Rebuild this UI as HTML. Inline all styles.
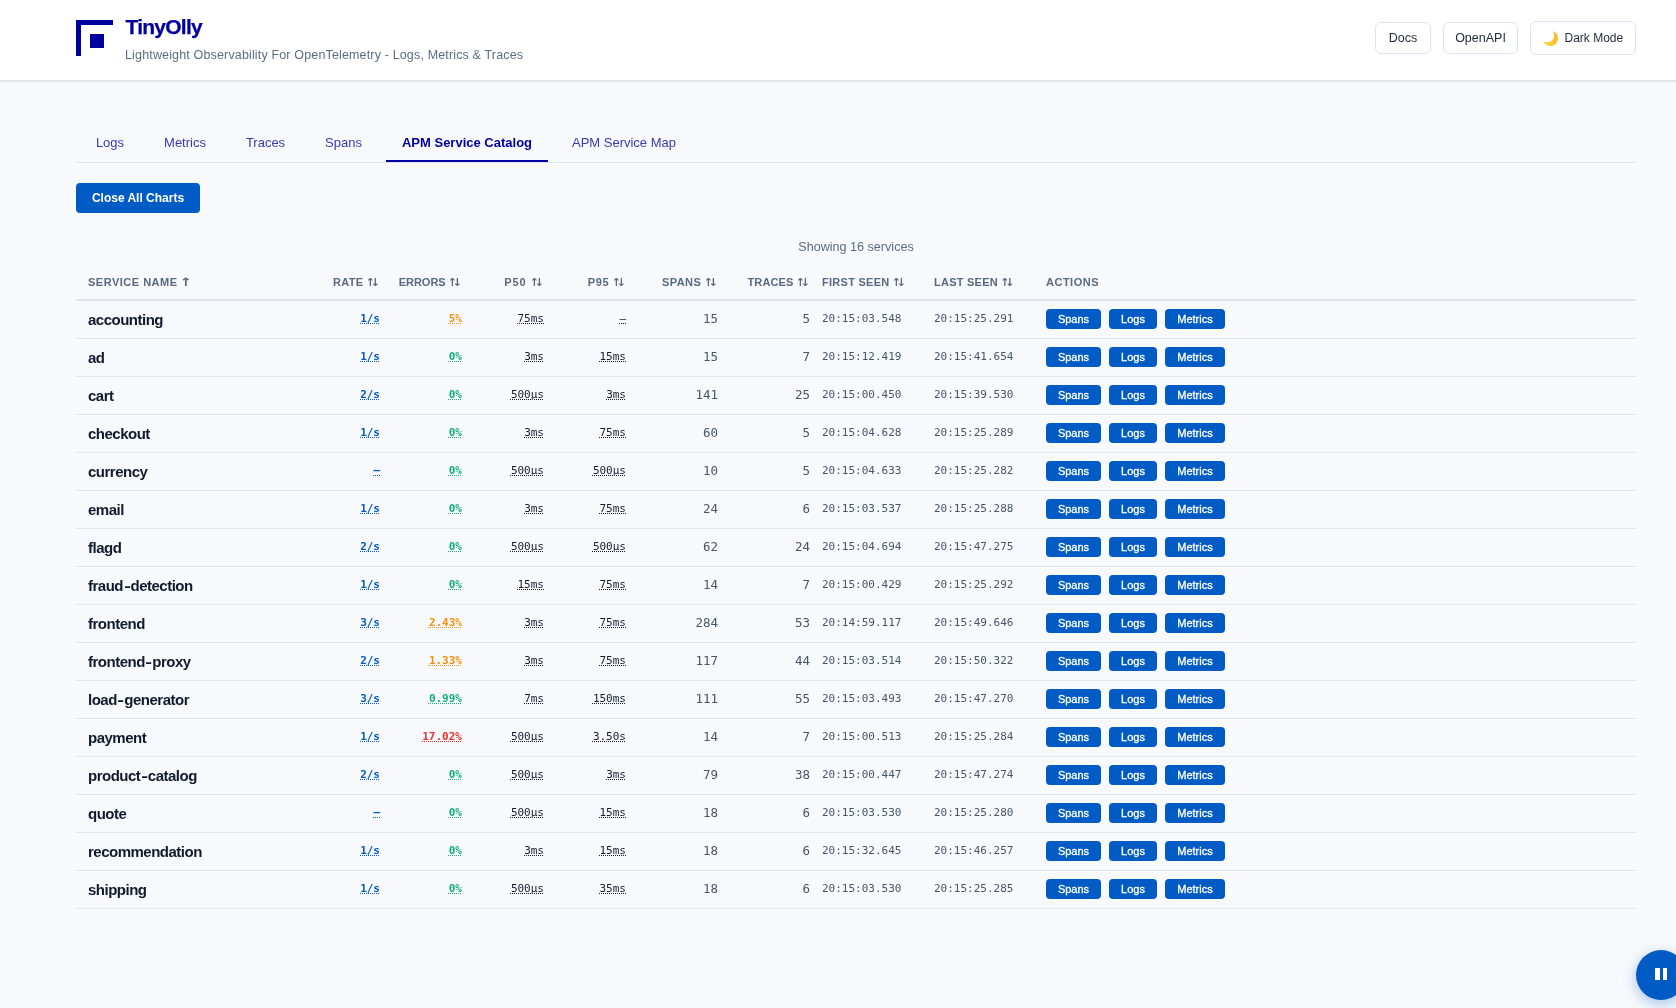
<!DOCTYPE html>
<html lang="en">
<head>
<meta charset="utf-8">
<title>TinyOlly</title>
<style>
*{box-sizing:border-box;margin:0;padding:0}
html,body{width:1676px;height:1008px;overflow:hidden}
body{will-change:transform;-webkit-font-smoothing:antialiased;background:#f8f9fc;font-family:"Liberation Sans",sans-serif;color:#1e293b;position:relative}
.hdr{position:absolute;left:0;top:0;width:1676px;height:81px;background:#fff;border-bottom:1px solid #dde3ec;box-shadow:0 1px 2px rgba(0,0,0,.09)}
.logo{position:absolute;left:76px;top:20px;width:37px;height:36px}
.title{position:absolute;left:125.5px;top:15px;font-size:21px;letter-spacing:-.75px;-webkit-text-stroke:.25px #0000a0;font-weight:700;color:#0000a0;line-height:24px;white-space:nowrap}
.sub{position:absolute;left:125px;top:47px;font-size:12.5px;letter-spacing:.155px;color:#5c6c84;line-height:16px;white-space:nowrap}
.hb{position:absolute;background:#fff;border:1px solid #dbe2f0;border-radius:6px;font-size:12px;color:#1e293b;text-align:center;white-space:nowrap}
.tabs{position:absolute;left:76px;top:124px;width:1560px;height:39px;border-bottom:1px solid #dfe5ef}
.tab{position:absolute;top:0;height:38px;line-height:38px;font-size:13px;color:#3a3ab0;white-space:nowrap;text-align:center}
.tab.on{color:#0000a0;font-weight:700;border-bottom:2px solid #0000a0}
.close{position:absolute;left:76px;top:183px;width:124px;height:30px;border-radius:4px;background:#005bc4;color:#fff;font-weight:700;font-size:12px;line-height:30px;text-align:center;white-space:nowrap}
.showing{position:absolute;left:76px;top:239px;width:1560px;text-align:center;font-size:12.6px;line-height:16px;color:#5c6c84}
.wrap{position:absolute;left:76px;top:263px;width:1560px}
table{border-collapse:collapse;table-layout:fixed;width:1560px}
th{height:37px;font-size:11px;font-weight:700;letter-spacing:.5px;color:#5a6880;text-transform:uppercase;text-align:left;padding:2px 6px 0;border-bottom:2px solid #dfe5ef;white-space:nowrap}
th.r,td.r{text-align:right}
th:first-child,td:first-child{padding-left:12px}
td{height:38px;padding:0 6px;border-bottom:1px solid #dfe5ef;white-space:nowrap;vertical-align:middle}
td.nm{font-size:15px;letter-spacing:-.5px;font-weight:700;color:#111a2e}
td.r,td.ts{font-family:"DejaVu Sans Mono","Liberation Mono",monospace;font-size:11px;padding-bottom:2px}
td.r{padding-right:5px}
.u{text-decoration:underline dotted;text-decoration-thickness:1px;text-underline-offset:1px}
td.rate{color:#005bc4;font-weight:700}
td.err{font-weight:700}
td.err.eg{color:#12b076}
td.err.ew{color:#f2900c}
td.err.er{color:#e5302f}
td.lat{color:#131c30}
td.num{color:#475569;font-size:12.5px}
td.ts{color:#475569}
.b{display:inline-block;height:20px;line-height:20px;border:0;border-radius:4px;background:#005bc4;color:#fff;font-family:"Liberation Sans",sans-serif;font-size:11px;width:55px;text-align:center;vertical-align:middle;-webkit-text-stroke:.3px #fff}
.b2{width:48px;margin-left:8px}
.b3{width:60px;margin-left:8px}
.fab{position:absolute;left:1636px;top:950px;width:50px;height:50px;border-radius:50%;background:#005bc4;box-shadow:0 4px 14px rgba(0,91,196,.35)}
.fab i{position:absolute;top:17.5px;width:4.5px;height:12.5px;background:#fff}
.a{font-family:"DejaVu Sans",sans-serif;font-size:11px;letter-spacing:-4.2px;margin-right:3.2px;margin-left:-1px}
.a1{display:inline-block;font-family:"DejaVu Sans",sans-serif;font-size:11.5px;letter-spacing:0;transform:scaleX(1.28);margin-left:-.6px}
th.fs,td.fs{padding-left:7px}
.hy{display:inline-block;transform:scaleX(1.35);margin:0 1.5px}
</style>
</head>
<body>
<div class="hdr">
<svg class="logo" viewBox="0 0 37 36"><path d="M0 0H37V5H5V36H0Z" fill="#0000a0"/><rect x="14" y="14" width="14" height="14" fill="#0000a0"/></svg>
<div class="title">TinyOlly</div>
<div class="sub">Lightweight Observability For OpenTelemetry - Logs, Metrics &amp; Traces</div>
<div class="hb" style="left:1375px;top:22px;width:56px;height:32px;line-height:30px;font-size:12.5px">Docs</div>
<div class="hb" style="left:1443px;top:22px;width:75px;height:32px;line-height:30px;font-size:12.5px">OpenAPI</div>
<svg style="position:absolute;left:1540px;top:28px;width:20px;height:20px;z-index:2" viewBox="1540 28 20 20"><defs><linearGradient id="mg" x1="0" y1="1" x2="1" y2="0"><stop offset="0" stop-color="#fde047"/><stop offset=".5" stop-color="#fbc12d"/><stop offset="1" stop-color="#f7b52a"/></linearGradient></defs><path d="M1552.7 31.2A7.56 7.56 0 1 1 1543.2 40.7A6.75 6.75 0 0 0 1552.7 31.2Z" fill="url(#mg)"/></svg>
<div class="hb" style="left:1530px;top:21px;width:106px;height:34px;line-height:32px;text-align:left;padding-left:33.5px">Dark Mode</div>
</div>
<div class="tabs">
<div class="tab" style="left:4px;width:60px">Logs</div>
<div class="tab" style="left:72px;width:74px">Metrics</div>
<div class="tab" style="left:154px;width:71px">Traces</div>
<div class="tab" style="left:233px;width:69px">Spans</div>
<div class="tab on" style="left:310px;width:162px">APM Service Catalog</div>
<div class="tab" style="left:480px;width:136px">APM Service Map</div>
</div>
<div class="close">Close All Charts</div>
<div class="showing">Showing 16 services</div>
<div class="wrap">
<table>
<colgroup><col style="width:227px"><col style="width:82px"><col style="width:82px"><col style="width:82px"><col style="width:82px"><col style="width:92px"><col style="width:92px"><col style="width:113px"><col style="width:112px"><col></colgroup>
<thead><tr><th>Service Name <span class="a1">↑</span></th><th class="r" style="letter-spacing:0.3px">Rate <span class="a">↑↓</span></th><th class="r" style="letter-spacing:0px">Errors <span class="a">↑↓</span></th><th class="r" style="letter-spacing:1.0px">P50 <span class="a">↑↓</span></th><th class="r" style="letter-spacing:0.6px">P95 <span class="a">↑↓</span></th><th class="r" style="letter-spacing:0.45px">Spans <span class="a">↑↓</span></th><th class="r" style="letter-spacing:0.15px">Traces <span class="a">↑↓</span></th><th class="fs" style="letter-spacing:0.27px">First Seen <span class="a">↑↓</span></th><th style="letter-spacing:0.25px">Last Seen <span class="a">↑↓</span></th><th>Actions</th></tr></thead>
<tbody>
<tr><td class="nm">accounting</td><td class="r rate"><span class="u">1/s</span></td><td class="r err ew"><span class="u">5%</span></td><td class="r lat"><span class="u">75ms</span></td><td class="r lat"><span class="u">–</span></td><td class="r num">15</td><td class="r num">5</td><td class="ts fs">20:15:03.548</td><td class="ts">20:15:25.291</td><td class="act"><button class="b">Spans</button><button class="b b2">Logs</button><button class="b b3">Metrics</button></td></tr>
<tr><td class="nm">ad</td><td class="r rate"><span class="u">1/s</span></td><td class="r err eg"><span class="u">0%</span></td><td class="r lat"><span class="u">3ms</span></td><td class="r lat"><span class="u">15ms</span></td><td class="r num">15</td><td class="r num">7</td><td class="ts fs">20:15:12.419</td><td class="ts">20:15:41.654</td><td class="act"><button class="b">Spans</button><button class="b b2">Logs</button><button class="b b3">Metrics</button></td></tr>
<tr><td class="nm">cart</td><td class="r rate"><span class="u">2/s</span></td><td class="r err eg"><span class="u">0%</span></td><td class="r lat"><span class="u">500µs</span></td><td class="r lat"><span class="u">3ms</span></td><td class="r num">141</td><td class="r num">25</td><td class="ts fs">20:15:00.450</td><td class="ts">20:15:39.530</td><td class="act"><button class="b">Spans</button><button class="b b2">Logs</button><button class="b b3">Metrics</button></td></tr>
<tr><td class="nm">checkout</td><td class="r rate"><span class="u">1/s</span></td><td class="r err eg"><span class="u">0%</span></td><td class="r lat"><span class="u">3ms</span></td><td class="r lat"><span class="u">75ms</span></td><td class="r num">60</td><td class="r num">5</td><td class="ts fs">20:15:04.628</td><td class="ts">20:15:25.289</td><td class="act"><button class="b">Spans</button><button class="b b2">Logs</button><button class="b b3">Metrics</button></td></tr>
<tr><td class="nm">currency</td><td class="r rate"><span class="u">–</span></td><td class="r err eg"><span class="u">0%</span></td><td class="r lat"><span class="u">500µs</span></td><td class="r lat"><span class="u">500µs</span></td><td class="r num">10</td><td class="r num">5</td><td class="ts fs">20:15:04.633</td><td class="ts">20:15:25.282</td><td class="act"><button class="b">Spans</button><button class="b b2">Logs</button><button class="b b3">Metrics</button></td></tr>
<tr><td class="nm">email</td><td class="r rate"><span class="u">1/s</span></td><td class="r err eg"><span class="u">0%</span></td><td class="r lat"><span class="u">3ms</span></td><td class="r lat"><span class="u">75ms</span></td><td class="r num">24</td><td class="r num">6</td><td class="ts fs">20:15:03.537</td><td class="ts">20:15:25.288</td><td class="act"><button class="b">Spans</button><button class="b b2">Logs</button><button class="b b3">Metrics</button></td></tr>
<tr><td class="nm">flagd</td><td class="r rate"><span class="u">2/s</span></td><td class="r err eg"><span class="u">0%</span></td><td class="r lat"><span class="u">500µs</span></td><td class="r lat"><span class="u">500µs</span></td><td class="r num">62</td><td class="r num">24</td><td class="ts fs">20:15:04.694</td><td class="ts">20:15:47.275</td><td class="act"><button class="b">Spans</button><button class="b b2">Logs</button><button class="b b3">Metrics</button></td></tr>
<tr><td class="nm">fraud<span class="hy">-</span>detection</td><td class="r rate"><span class="u">1/s</span></td><td class="r err eg"><span class="u">0%</span></td><td class="r lat"><span class="u">15ms</span></td><td class="r lat"><span class="u">75ms</span></td><td class="r num">14</td><td class="r num">7</td><td class="ts fs">20:15:00.429</td><td class="ts">20:15:25.292</td><td class="act"><button class="b">Spans</button><button class="b b2">Logs</button><button class="b b3">Metrics</button></td></tr>
<tr><td class="nm">frontend</td><td class="r rate"><span class="u">3/s</span></td><td class="r err ew"><span class="u">2.43%</span></td><td class="r lat"><span class="u">3ms</span></td><td class="r lat"><span class="u">75ms</span></td><td class="r num">284</td><td class="r num">53</td><td class="ts fs">20:14:59.117</td><td class="ts">20:15:49.646</td><td class="act"><button class="b">Spans</button><button class="b b2">Logs</button><button class="b b3">Metrics</button></td></tr>
<tr><td class="nm">frontend<span class="hy">-</span>proxy</td><td class="r rate"><span class="u">2/s</span></td><td class="r err ew"><span class="u">1.33%</span></td><td class="r lat"><span class="u">3ms</span></td><td class="r lat"><span class="u">75ms</span></td><td class="r num">117</td><td class="r num">44</td><td class="ts fs">20:15:03.514</td><td class="ts">20:15:50.322</td><td class="act"><button class="b">Spans</button><button class="b b2">Logs</button><button class="b b3">Metrics</button></td></tr>
<tr><td class="nm">load<span class="hy">-</span>generator</td><td class="r rate"><span class="u">3/s</span></td><td class="r err eg"><span class="u">0.99%</span></td><td class="r lat"><span class="u">7ms</span></td><td class="r lat"><span class="u">150ms</span></td><td class="r num">111</td><td class="r num">55</td><td class="ts fs">20:15:03.493</td><td class="ts">20:15:47.270</td><td class="act"><button class="b">Spans</button><button class="b b2">Logs</button><button class="b b3">Metrics</button></td></tr>
<tr><td class="nm">payment</td><td class="r rate"><span class="u">1/s</span></td><td class="r err er"><span class="u">17.02%</span></td><td class="r lat"><span class="u">500µs</span></td><td class="r lat"><span class="u">3.50s</span></td><td class="r num">14</td><td class="r num">7</td><td class="ts fs">20:15:00.513</td><td class="ts">20:15:25.284</td><td class="act"><button class="b">Spans</button><button class="b b2">Logs</button><button class="b b3">Metrics</button></td></tr>
<tr><td class="nm">product<span class="hy">-</span>catalog</td><td class="r rate"><span class="u">2/s</span></td><td class="r err eg"><span class="u">0%</span></td><td class="r lat"><span class="u">500µs</span></td><td class="r lat"><span class="u">3ms</span></td><td class="r num">79</td><td class="r num">38</td><td class="ts fs">20:15:00.447</td><td class="ts">20:15:47.274</td><td class="act"><button class="b">Spans</button><button class="b b2">Logs</button><button class="b b3">Metrics</button></td></tr>
<tr><td class="nm">quote</td><td class="r rate"><span class="u">–</span></td><td class="r err eg"><span class="u">0%</span></td><td class="r lat"><span class="u">500µs</span></td><td class="r lat"><span class="u">15ms</span></td><td class="r num">18</td><td class="r num">6</td><td class="ts fs">20:15:03.530</td><td class="ts">20:15:25.280</td><td class="act"><button class="b">Spans</button><button class="b b2">Logs</button><button class="b b3">Metrics</button></td></tr>
<tr><td class="nm">recommendation</td><td class="r rate"><span class="u">1/s</span></td><td class="r err eg"><span class="u">0%</span></td><td class="r lat"><span class="u">3ms</span></td><td class="r lat"><span class="u">15ms</span></td><td class="r num">18</td><td class="r num">6</td><td class="ts fs">20:15:32.645</td><td class="ts">20:15:46.257</td><td class="act"><button class="b">Spans</button><button class="b b2">Logs</button><button class="b b3">Metrics</button></td></tr>
<tr><td class="nm">shipping</td><td class="r rate"><span class="u">1/s</span></td><td class="r err eg"><span class="u">0%</span></td><td class="r lat"><span class="u">500µs</span></td><td class="r lat"><span class="u">35ms</span></td><td class="r num">18</td><td class="r num">6</td><td class="ts fs">20:15:03.530</td><td class="ts">20:15:25.285</td><td class="act"><button class="b">Spans</button><button class="b b2">Logs</button><button class="b b3">Metrics</button></td></tr>
</tbody>
</table>
</div>
<div class="fab"><i style="left:19px"></i><i style="left:26.7px"></i></div>
</body>
</html>
